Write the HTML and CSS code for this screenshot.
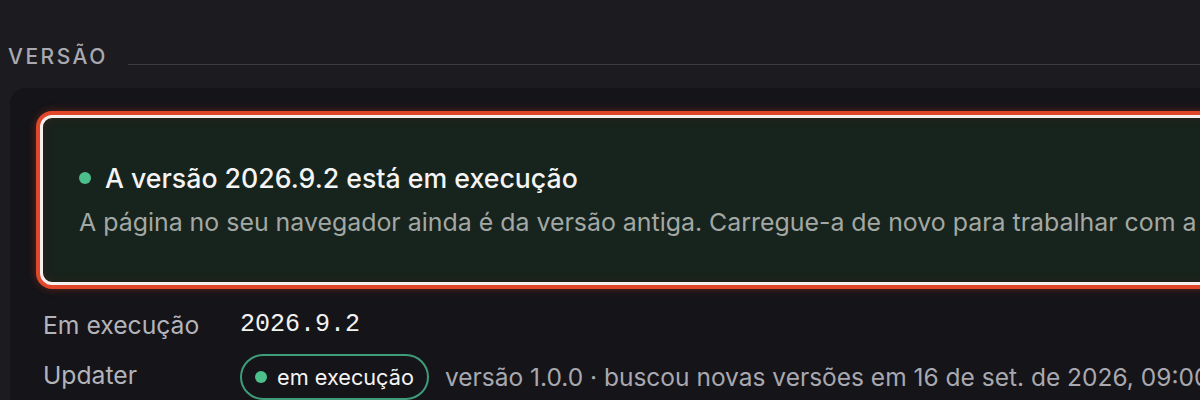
FILE: index.html
```html
<!DOCTYPE html>
<html lang="pt">
<head>
<meta charset="utf-8">
<title>Versão</title>
<link rel="stylesheet" href="styles.css">
</head>
<body>
<section class="section">
  <div class="section-head">
    <h2 class="section-title">VERSÃO</h2>
    <div class="section-rule"></div>
  </div>
  <div class="card">
    <div class="banner">
      <div class="banner-title"><span class="dot"></span>A versão 2026.9.2 está em execução</div>
      <div class="banner-text">A página no seu navegador ainda é da versão antiga. Carregue-a de novo para trabalhar com a versão atual.</div>
    </div>
    <div class="rows">
      <div class="row">
        <div class="label">Em execução</div>
        <div class="value mono">2026.9.2</div>
      </div>
      <div class="row">
        <div class="label label-raised">Updater</div>
        <div class="value">
          <span class="pill"><span class="dot small"></span>em execução</span>
          <span class="meta">versão 1.0.0 · buscou novas versões em 16 de set. de 2026, 09:00</span>
        </div>
      </div>
    </div>
  </div>
</section>
</body>
</html>
```
FILE: styles.css
```css
html, body {
  margin: 0;
  padding: 0;
  background: #1c1b20;
  overflow: hidden;
  font-family: Inter, "Noto Sans", sans-serif;
}
.section {
  padding-top: 44px;
}
.section-head {
  display: flex;
  align-items: flex-end;
  padding-left: 8px;
}
.section-title {
  margin: 0;
  font-size: 21px;
  font-weight: 500;
  letter-spacing: 2.5px;
  color: #a9a9b1;
  line-height: 26px;
}
.section-rule {
  flex: 1;
  height: 1px;
  background: #3c3c43;
  margin-left: 20px;
  margin-bottom: 5px;
}
.card {
  margin-top: 18px;
  margin-left: 10px;
  width: 1400px;
  background: #151418;
  border-radius: 16px;
  padding: 27px 0 30px 30px;
}
.banner {
  border: 3px solid #f6f1ef;
  border-radius: 12px;
  box-shadow: 0 0 0 4px #e1482b, 0 0 8px 4px rgba(225, 72, 43, 0.35), inset 0 0 10px rgba(70, 35, 25, 0.55);
  background: #17231d;
  padding: 45px 36px 45px;
}
.banner-title {
  display: flex;
  align-items: center;
  font-size: 26.7px;
  font-weight: 500;
  line-height: 30px;
  color: #f4f4f4;
}
.dot {
  width: 12px;
  height: 12px;
  border-radius: 50%;
  background: #4cbf8b;
  margin-right: 14px;
  flex: none;
}
.banner-text {
  margin-top: 14px;
  font-size: 24.9px;
  line-height: 30px;
  color: #a3a8a4;
  white-space: nowrap;
}
.rows {
  display: flex;
  flex-direction: column;
  gap: 13px;
  padding-top: 24px;
  padding-left: 3px;
}
.row {
  display: grid;
  grid-template-columns: 197px 1fr;
  align-items: center;
}
.label {
  font-size: 24.7px;
  color: #b3b3bb;
  line-height: 32px;
}
.label-raised {
  padding-bottom: 5px;
}
.value {
  display: flex;
  align-items: center;
  gap: 16px;
  white-space: nowrap;
}
.mono {
  font-family: "Liberation Mono", monospace;
  font-size: 25px;
  color: #f2f2f2;
  line-height: 32px;
}
.pill {
  display: inline-flex;
  align-items: center;
  height: 42px;
  padding: 0 13px 0 13px;
  border: 2px solid #3e9d78;
  border-radius: 999px;
  font-size: 21.7px;
  color: #f4f4f4;
}
.dot.small {
  width: 12px;
  height: 12px;
  margin-right: 10px;
}
.meta {
  font-size: 24.5px;
  color: #a8a8b0;
}
```
